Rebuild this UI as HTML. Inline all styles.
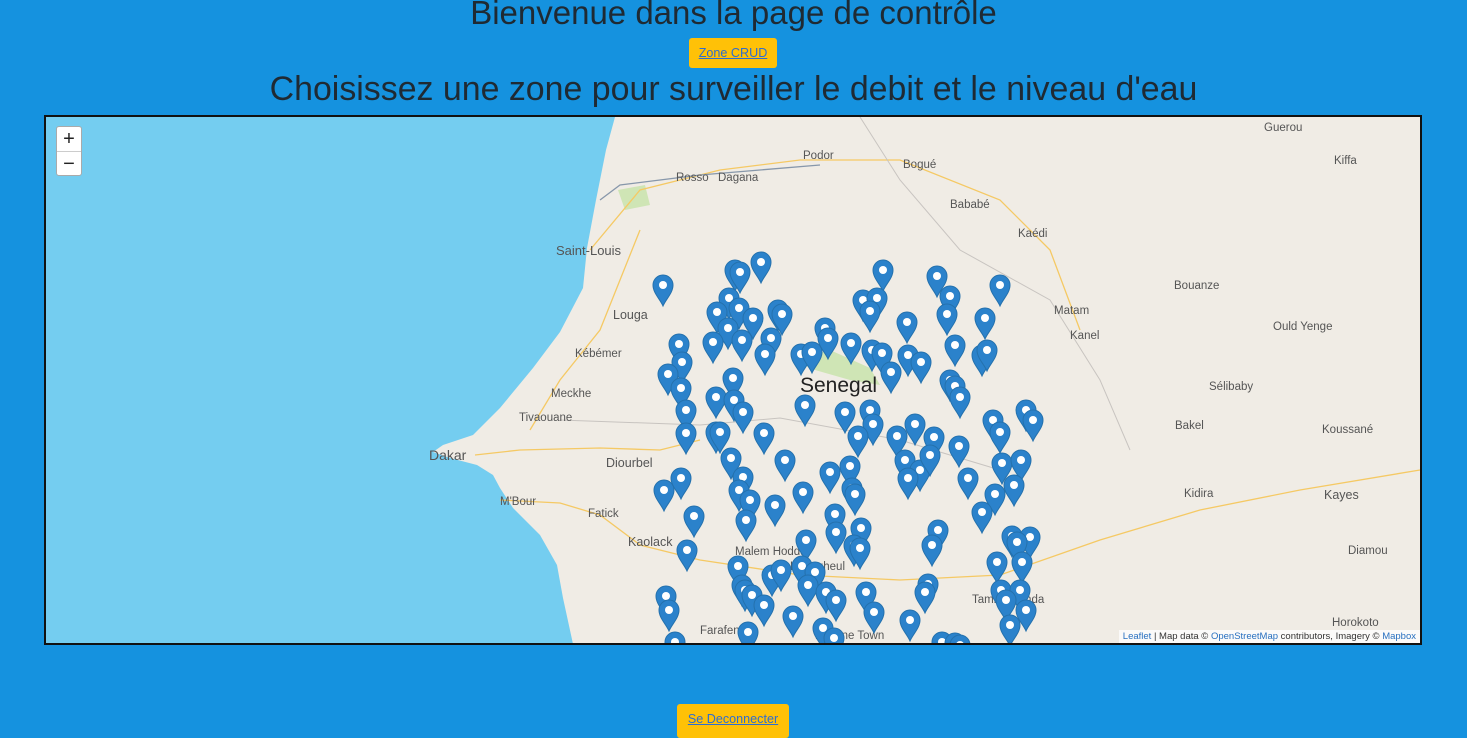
<!DOCTYPE html>
<html><head><meta charset="utf-8"><style>
html,body{margin:0;padding:0;background:#1592DF;width:1467px;height:730px;overflow:hidden;font-family:"Liberation Sans",sans-serif}
h1{position:absolute;left:0;width:1467px;text-align:center;margin:0;font-weight:normal;color:#1f2a33;white-space:nowrap}
.btn{position:absolute;background:#FFC107;border-radius:3px;color:#2F6DD0;text-decoration:underline;font-size:12.6px;text-align:center;line-height:30px}
#map{position:absolute;left:44px;top:115px;width:1374px;height:526px;border:2px solid #111;overflow:hidden;background:#74CDF0}
#zoom{position:absolute;left:10px;top:9px;width:24px;height:48px;background:#fff;border:1px solid #aaa;border-radius:3px;font-size:20px;text-align:center;line-height:24px;color:#222}
#attr{position:absolute;right:0;bottom:0;background:rgba(255,255,255,.75);font-size:9.5px;color:#333;padding:1px 4px;white-space:nowrap}
#attr span{color:#2870c0}
</style></head><body>
<h1 style="top:-6px;font-size:33px">Bienvenue dans la page de contrôle</h1>
<div class="btn" style="left:689px;top:38px;width:88px;height:30px">Zone CRUD</div>
<h1 style="top:70px;font-size:33.9px">Choisissez une zone pour surveiller le debit et le niveau d'eau</h1>
<div id="map">
<svg width="1374" height="526" viewBox="46 117 1374 526" style="position:absolute;left:0;top:0">
<defs>
<g id="m"><path d="M0,21 C-3,14 -10,8 -10,0 A10,10 0 1 1 10,0 C10,8 3,14 0,21Z" fill="#2B82CB" stroke="#2471AD" stroke-width="1"/><circle r="4" fill="#fff"/></g>
</defs>
<path d="M615,117 L1421,117 L1421,644 L573,644 L563,598 L557,565 L540,535 L513,508 L500,488 L493,475 L477,465 L450,458 L433,452 L443,445 L473,435 L500,408 L533,368 L560,332 L583,288 L587,248 L596,200 L606,150 Z" fill="#F0ECE5"/>
<path d="M792,360 L830,350 L870,368 L880,385 L850,380 L815,370Z" fill="#CFE5B5"/>
<path d="M618,190 L645,185 L650,205 L625,210Z" fill="#CFE5B5"/>
<g fill="none" stroke="#F5C964" stroke-width="1.3">
<path d="M475,455 L520,450 L600,448 L660,450 L700,440"/>
<path d="M500,500 L560,503 L600,515 L640,545 L700,560 L800,575 L900,580 L1000,575 L1100,540 L1200,510 L1300,490 L1420,470"/>
<path d="M590,250 L640,190 L720,170 L800,160 L900,160 L1000,200 L1050,250 L1080,330"/>
<path d="M530,430 L560,380 L600,330 L620,280 L640,230"/>
</g>
<path d="M600,200 L620,185 L660,180 L700,175 L760,170 L820,165" fill="none" stroke="#8797aa" stroke-width="1.3"/>
<g fill="none" stroke="#c8c4c0" stroke-width="1">
<path d="M560,420 L700,425 L780,418 L900,440 L1000,470"/>
<path d="M860,117 L900,180 L960,250 L1050,300 L1100,380 L1130,450"/>
</g>
<g font-size="11.5" fill="#555" font-family="Liberation Sans,sans-serif">
<text x="676" y="181">Rosso</text><text x="718" y="181">Dagana</text><text x="803" y="159">Podor</text><text x="903" y="168">Bogué</text><text x="950" y="208">Bababé</text><text x="1018" y="237">Kaédi</text><text x="556" y="255" font-size="13">Saint-Louis</text><text x="613" y="319" font-size="12.5">Louga</text><text x="575" y="357">Kébémer</text><text x="551" y="397">Meckhe</text><text x="519" y="421">Tivaouane</text><text x="429" y="460" font-size="14">Dakar</text><text x="606" y="467" font-size="12.5">Diourbel</text><text x="500" y="505">M'Bour</text><text x="588" y="517">Fatick</text><text x="628" y="546" font-size="12.5">Kaolack</text><text x="735" y="555">Malem Hoddar</text><text x="700" y="634">Farafenni</text><text x="1054" y="314">Matam</text><text x="1070" y="339">Kanel</text><text x="1174" y="289">Bouanze</text><text x="1273" y="330">Ould Yenge</text><text x="1209" y="390">Sélibaby</text><text x="1175" y="429">Bakel</text><text x="1322" y="433">Koussané</text><text x="1184" y="497">Kidira</text><text x="1324" y="499" font-size="12.5">Kayes</text><text x="1348" y="554">Diamou</text><text x="1332" y="626">Horokoto</text><text x="1264" y="131">Guerou</text><text x="1334" y="164">Kiffa</text><text x="972" y="603">Tambacounda</text><text x="790" y="570">Koungheul</text><text x="815" y="639">Kaffrine Town</text>
</g>
<text x="800" y="392" font-size="21" fill="#222" font-family="Liberation Sans,sans-serif">Senegal</text>
<g>
<use href="#m" x="663" y="285"/><use href="#m" x="735" y="270"/><use href="#m" x="740" y="272"/><use href="#m" x="761" y="262"/><use href="#m" x="883" y="270"/><use href="#m" x="937" y="276"/><use href="#m" x="1000" y="285"/><use href="#m" x="729" y="298"/><use href="#m" x="717" y="312"/><use href="#m" x="739" y="308"/><use href="#m" x="753" y="318"/><use href="#m" x="778" y="310"/><use href="#m" x="782" y="314"/><use href="#m" x="863" y="300"/><use href="#m" x="877" y="298"/><use href="#m" x="870" y="311"/><use href="#m" x="950" y="296"/><use href="#m" x="947" y="314"/><use href="#m" x="907" y="322"/><use href="#m" x="985" y="318"/><use href="#m" x="825" y="328"/><use href="#m" x="828" y="338"/><use href="#m" x="728" y="328"/><use href="#m" x="713" y="342"/><use href="#m" x="742" y="340"/><use href="#m" x="771" y="338"/><use href="#m" x="679" y="344"/><use href="#m" x="682" y="362"/><use href="#m" x="765" y="354"/><use href="#m" x="801" y="354"/><use href="#m" x="812" y="352"/><use href="#m" x="851" y="343"/><use href="#m" x="872" y="350"/><use href="#m" x="882" y="353"/><use href="#m" x="908" y="355"/><use href="#m" x="921" y="362"/><use href="#m" x="891" y="372"/><use href="#m" x="955" y="345"/><use href="#m" x="982" y="355"/><use href="#m" x="987" y="350"/><use href="#m" x="668" y="374"/><use href="#m" x="681" y="388"/><use href="#m" x="733" y="378"/><use href="#m" x="716" y="397"/><use href="#m" x="734" y="400"/><use href="#m" x="743" y="412"/><use href="#m" x="950" y="380"/><use href="#m" x="955" y="386"/><use href="#m" x="960" y="397"/><use href="#m" x="805" y="405"/><use href="#m" x="845" y="412"/><use href="#m" x="870" y="410"/><use href="#m" x="873" y="424"/><use href="#m" x="858" y="436"/><use href="#m" x="686" y="410"/><use href="#m" x="686" y="433"/><use href="#m" x="716" y="432"/><use href="#m" x="720" y="432"/><use href="#m" x="764" y="433"/><use href="#m" x="993" y="420"/><use href="#m" x="1000" y="432"/><use href="#m" x="1026" y="410"/><use href="#m" x="1033" y="420"/><use href="#m" x="897" y="436"/><use href="#m" x="915" y="424"/><use href="#m" x="934" y="437"/><use href="#m" x="959" y="446"/><use href="#m" x="785" y="460"/><use href="#m" x="731" y="458"/><use href="#m" x="743" y="477"/><use href="#m" x="739" y="490"/><use href="#m" x="681" y="478"/><use href="#m" x="664" y="490"/><use href="#m" x="830" y="472"/><use href="#m" x="850" y="466"/><use href="#m" x="905" y="460"/><use href="#m" x="920" y="470"/><use href="#m" x="908" y="478"/><use href="#m" x="930" y="455"/><use href="#m" x="1002" y="463"/><use href="#m" x="1021" y="460"/><use href="#m" x="968" y="478"/><use href="#m" x="1014" y="485"/><use href="#m" x="995" y="494"/><use href="#m" x="982" y="512"/><use href="#m" x="803" y="492"/><use href="#m" x="775" y="505"/><use href="#m" x="750" y="500"/><use href="#m" x="746" y="520"/><use href="#m" x="694" y="516"/><use href="#m" x="835" y="514"/><use href="#m" x="861" y="528"/><use href="#m" x="836" y="532"/><use href="#m" x="852" y="488"/><use href="#m" x="855" y="494"/><use href="#m" x="1012" y="536"/><use href="#m" x="1030" y="537"/><use href="#m" x="938" y="530"/><use href="#m" x="932" y="545"/><use href="#m" x="1017" y="542"/><use href="#m" x="997" y="562"/><use href="#m" x="1022" y="562"/><use href="#m" x="806" y="540"/><use href="#m" x="854" y="545"/><use href="#m" x="860" y="548"/><use href="#m" x="687" y="550"/><use href="#m" x="738" y="566"/><use href="#m" x="772" y="575"/><use href="#m" x="781" y="570"/><use href="#m" x="742" y="585"/><use href="#m" x="745" y="590"/><use href="#m" x="802" y="566"/><use href="#m" x="815" y="572"/><use href="#m" x="808" y="585"/><use href="#m" x="826" y="592"/><use href="#m" x="836" y="600"/><use href="#m" x="752" y="595"/><use href="#m" x="764" y="605"/><use href="#m" x="866" y="592"/><use href="#m" x="874" y="612"/><use href="#m" x="928" y="584"/><use href="#m" x="925" y="592"/><use href="#m" x="1001" y="590"/><use href="#m" x="1020" y="590"/><use href="#m" x="1006" y="600"/><use href="#m" x="1026" y="610"/><use href="#m" x="666" y="596"/><use href="#m" x="669" y="610"/><use href="#m" x="793" y="616"/><use href="#m" x="823" y="628"/><use href="#m" x="834" y="638"/><use href="#m" x="910" y="620"/><use href="#m" x="1010" y="625"/><use href="#m" x="748" y="632"/><use href="#m" x="675" y="642"/><use href="#m" x="942" y="642"/><use href="#m" x="955" y="643"/><use href="#m" x="960" y="645"/>
</g>
</svg>
<div id="zoom"><div style="border-bottom:1px solid #ccc;height:24px">+</div><div>−</div></div>
<div id="attr"><span>Leaflet</span> | Map data © <span>OpenStreetMap</span> contributors, Imagery © <span>Mapbox</span></div>
</div>
<div class="btn" style="left:677px;top:704px;width:112px;height:34px;line-height:31px">Se Deconnecter</div>
</body></html>
